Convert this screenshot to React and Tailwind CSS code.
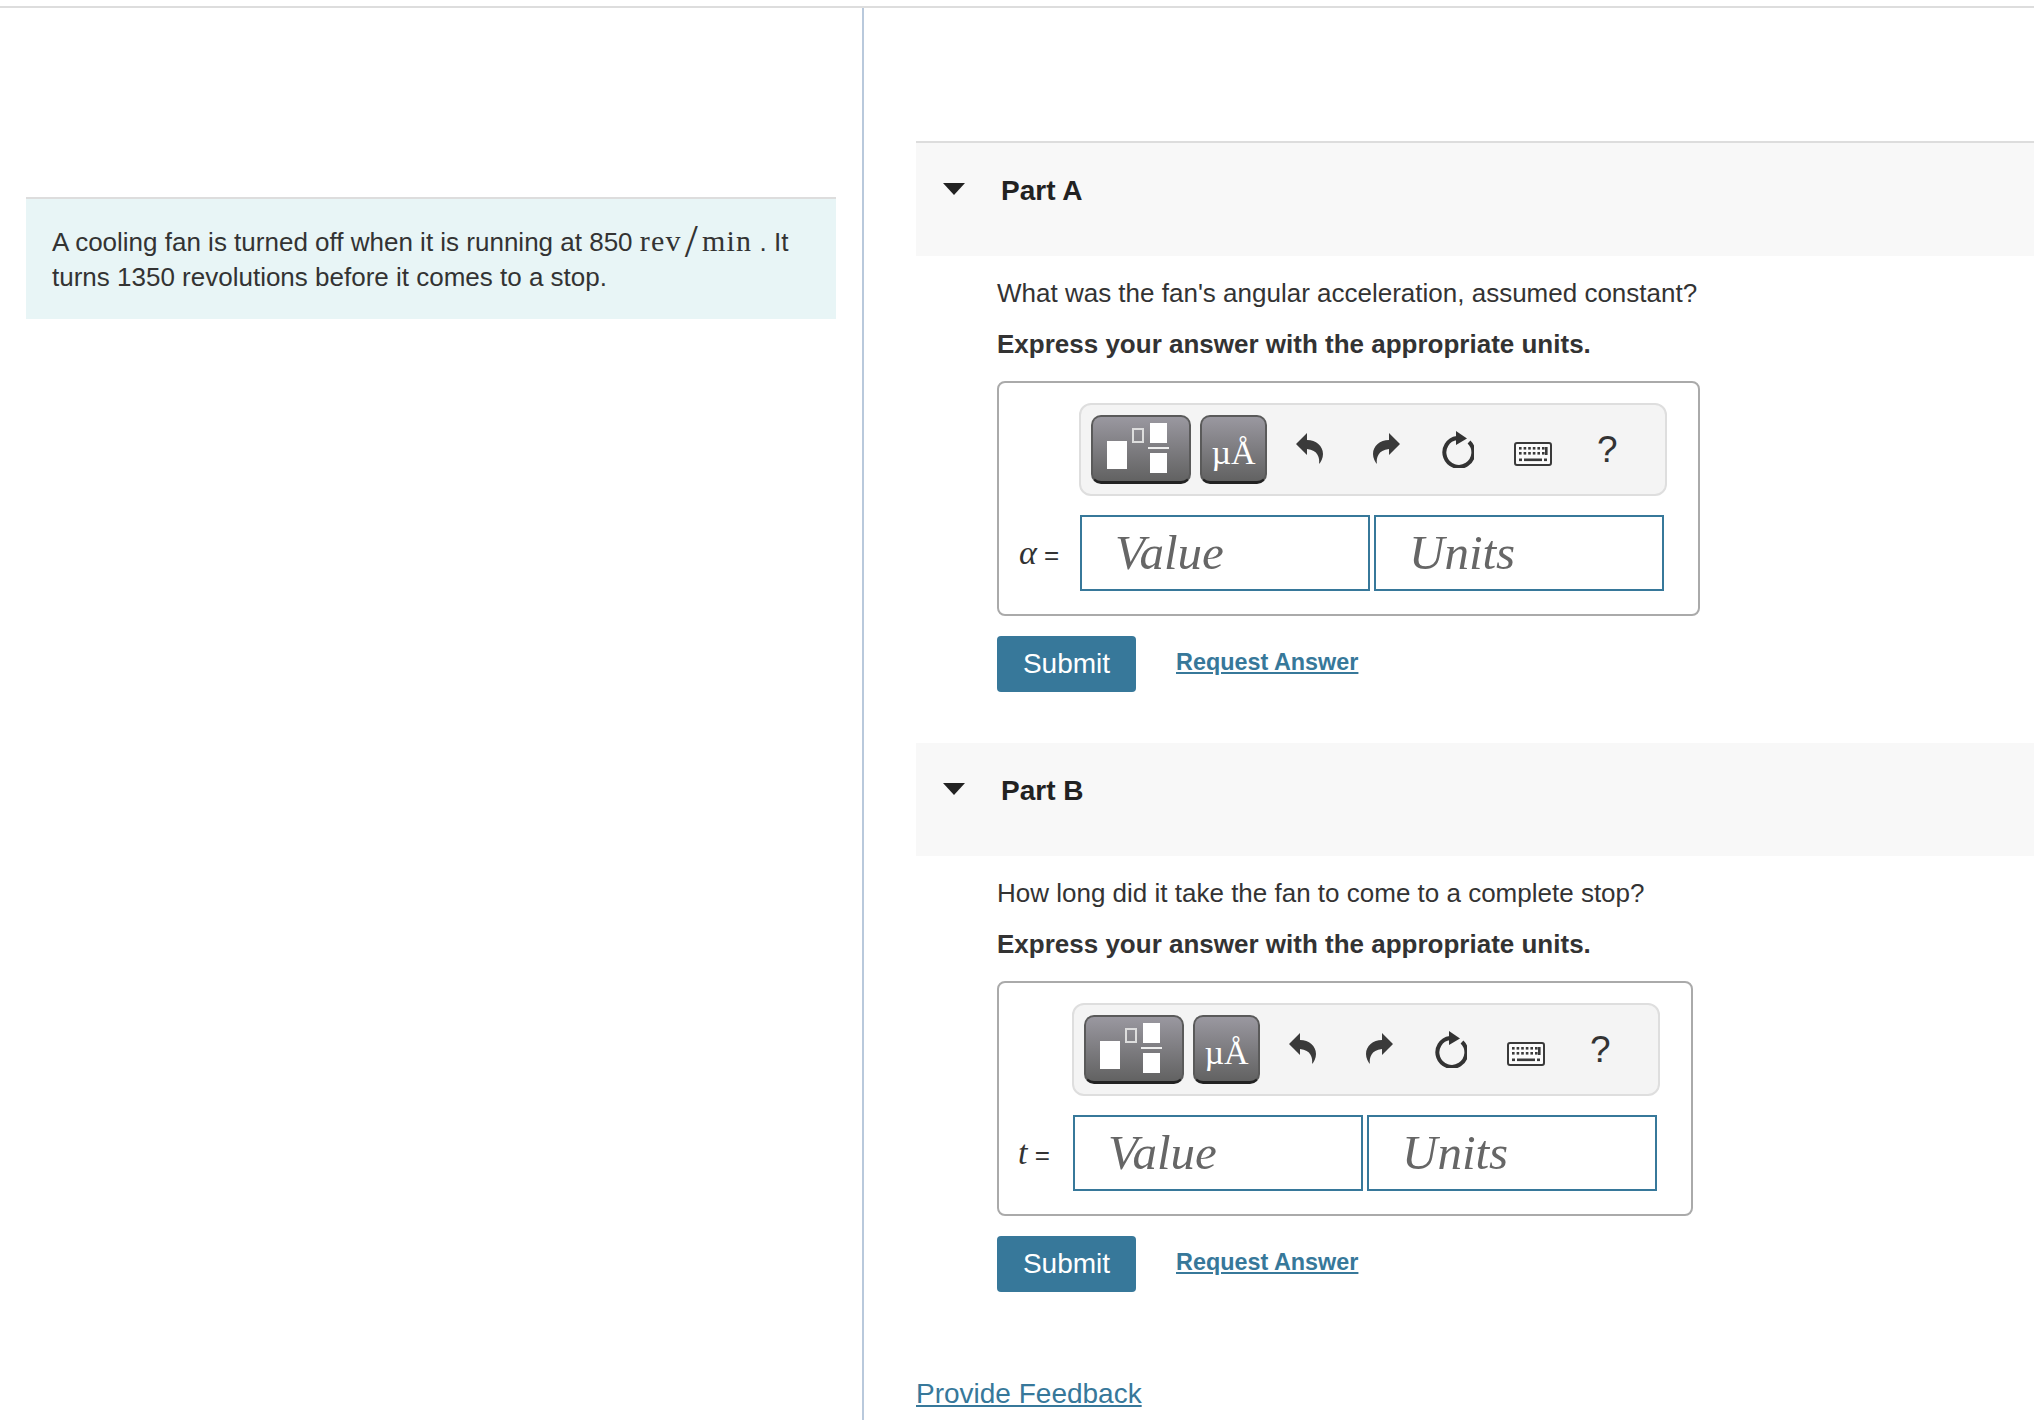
const TemplateIcon = () => (
  <svg width="96" height="64" viewBox="0 0 96 64" className="block">
    <rect x="14" y="24" width="20" height="28" fill="#fff" />
    <rect x="40" y="12" width="10" height="13" fill="none" stroke="#ddd" strokeWidth="2" />
    <rect x="57" y="6" width="17" height="20" fill="#fff" />
    <rect x="55" y="30" width="21" height="2" fill="#eee" />
    <rect x="57" y="36" width="17" height="20" fill="#fff" />
  </svg>
);

const ArrowIcon = ({ flip }) => (
  <svg width="27" height="31" viewBox="0 0 27 31" className={flip ? 'block -scale-x-100' : 'block'}>
    <path d="M0 11 L11 0 V7 C20 7 27 13 27 21 C27 25 25 29 23 31 C24 25 22 17 11 16 V22 Z" fill="#3a3a3a" />
  </svg>
);

const ResetIcon = () => (
  <svg width="34" height="37" viewBox="0 0 34 37" className="block">
    <path d="M29 11 A14.5 14.5 0 1 1 17 7" fill="none" stroke="#333" strokeWidth="4" />
    <path d="M16 0 L27 7.5 L16 14 Z" fill="#333" />
  </svg>
);

const KeyboardIcon = () => {
  const top = [0, 1, 2, 3, 4, 5];
  return (
    <svg width="38" height="24" viewBox="0 0 38 24" className="block">
      <rect x="1" y="1" width="36" height="22" rx="2" fill="#fbfbfb" stroke="#3a3a3a" strokeWidth="2" />
      {top.map((i) => (
        <rect key={i} x={5 + i * 4.6} y="5" width="2.6" height="2.6" fill="#3a3a3a" />
      ))}
      {top.map((i) => (
        <rect key={i} x={5 + i * 4.6} y="10" width="2.6" height="2.6" fill="#3a3a3a" />
      ))}
      <rect x="31" y="5" width="2.6" height="8" fill="#3a3a3a" />
      <rect x="5" y="16.5" width="3" height="2.6" fill="#3a3a3a" />
      <rect x="10" y="16.5" width="18" height="2.6" fill="#3a3a3a" />
      <rect x="30" y="16.5" width="3" height="2.6" fill="#3a3a3a" />
    </svg>
  );
};

const Caret = () => (
  <svg width="22" height="12" viewBox="0 0 22 12" className="block">
    <path d="M0 0 H22 L11 12 Z" fill="#222" />
  </svg>
);

const Toolbar = () => (
  <div className="flex h-[93px] w-[588px] items-start rounded-xl border-2 border-[#dedede] bg-[#f4f4f4] pl-[10px] pt-[10px]">
    <button className="h-[69px] w-[100px] rounded-[10px] border-2 border-b-[3px] border-[#5a5a5a] border-b-[#222] bg-gradient-to-b from-[#9a98a0] to-[#626262]">
      <TemplateIcon />
    </button>
    <button className="ml-[9px] h-[69px] w-[67px] rounded-[10px] border-2 border-b-[3px] border-[#5a5a5a] border-b-[#222] bg-gradient-to-b from-[#9a98a0] to-[#626262] font-['Liberation_Serif',serif] text-[34px] leading-[72px] text-white">
      µÅ
    </button>
    <div className="ml-[29px] mt-[18px]"><ArrowIcon /></div>
    <div className="ml-[50px] mt-[18px]"><ArrowIcon flip /></div>
    <div className="ml-[40px] mt-[16px]"><ResetIcon /></div>
    <div className="ml-[40px] mt-[27px]"><KeyboardIcon /></div>
    <div className="ml-[45px] mt-[12px] text-[37px] font-light leading-[46px] text-[#333]">?</div>
  </div>
);

const Field = ({ placeholder, width }) => (
  <input
    placeholder={placeholder}
    className={`h-[76px] ${width} border-2 border-[#37789a] bg-white pb-[2px] pl-[33px] font-['Liberation_Serif',serif] text-[49px] italic placeholder:text-[#666] outline-none`}
  />
);

const Part = ({ title, question, symbol, headerClass, boxClass, labelClass }) => (
  <section>
    <div className={`flex items-start bg-[#f8f8f8] ${headerClass}`}>
      <div className="ml-[27px] mt-[40px]"><Caret /></div>
      <h2 className="ml-[36px] mt-[30px] text-[28px] font-bold leading-[35px] text-[#222]">{title}</h2>
    </div>
    <div className="pl-[81px]">
      <p className="mt-5 text-[26px] leading-[35px]">{question}</p>
      <p className="mt-4 text-[26px] font-bold leading-[35px]">Express your answer with the appropriate units.</p>
      <div className={`mt-[19px] h-[235px] rounded-lg border-2 border-[#aaa] pt-5 ${boxClass}`}>
        <Toolbar />
        <div className="mt-[19px] flex items-center">
          <div className={`pb-[2px] text-[26px] ${labelClass}`}>
            <span className="font-['Liberation_Serif',serif] text-[34px] italic">{symbol}</span> =
          </div>
          <div className="flex gap-[4px]">
            <Field placeholder="Value" width="w-[290px]" />
            <Field placeholder="Units" width="w-[290px]" />
          </div>
        </div>
      </div>
      <div className="mt-5 flex items-center">
        <button className="h-[56px] w-[139px] rounded bg-[#37789a] text-[28px] text-white">Submit</button>
        <a className="ml-10 mb-[2px] text-[23.4px] font-bold text-[#37789a] underline" href="#">Request Answer</a>
      </div>
    </div>
  </section>
);

export default function App() {
  return (
    <div className="h-[1420px] overflow-hidden bg-white font-['Liberation_Sans',Arial,sans-serif] text-[#333]">
      <div className="h-[8px] border-b-2 border-[#ddd]" />
      <div className="flex h-[1412px]">
        <aside className="w-[864px] shrink-0 border-r-2 border-[#b9c9dc] pl-[26px] pr-[26px] pt-[189px]">
          <div className="h-[122px] border-t-2 border-[#ddd] bg-[#e8f5f6] px-[26px] pt-[24px] text-[26px] leading-[35px]">
            A cooling fan is turned off when it is running at 850{' '}
            <span className="font-['Liberation_Serif',serif] text-[30px] tracking-[1.2px]">
              rev<span className="mx-[3px] inline-block translate-y-[6px] text-[47px] font-light leading-[20px]">/</span>min
            </span>{' '}
            . It turns 1350 revolutions before it comes to a stop.
          </div>
        </aside>
        <main className="flex-1 pl-[52px] pt-[133px]">
          <Part
            title="Part A"
            question="What was the fan's angular acceleration, assumed constant?"
            symbol="α"
            headerClass="h-[115px] border-t-2 border-[#ddd]"
            boxClass="w-[703px] pl-[80px]"
            labelClass="w-[61px] -ml-[60px] shrink-0"
          />
          <div className="h-[51px]" />
          <Part
            title="Part B"
            question="How long did it take the fan to come to a complete stop?"
            symbol="t"
            headerClass="h-[113px]"
            boxClass="w-[696px] pl-[73px]"
            labelClass="w-[55px] -ml-[54px] shrink-0"
          />
          <a className="mt-[84px] block w-max text-[28px] leading-[35px] text-[#37789a] underline" href="#">
            Provide Feedback
          </a>
        </main>
      </div>
    </div>
  );
}
